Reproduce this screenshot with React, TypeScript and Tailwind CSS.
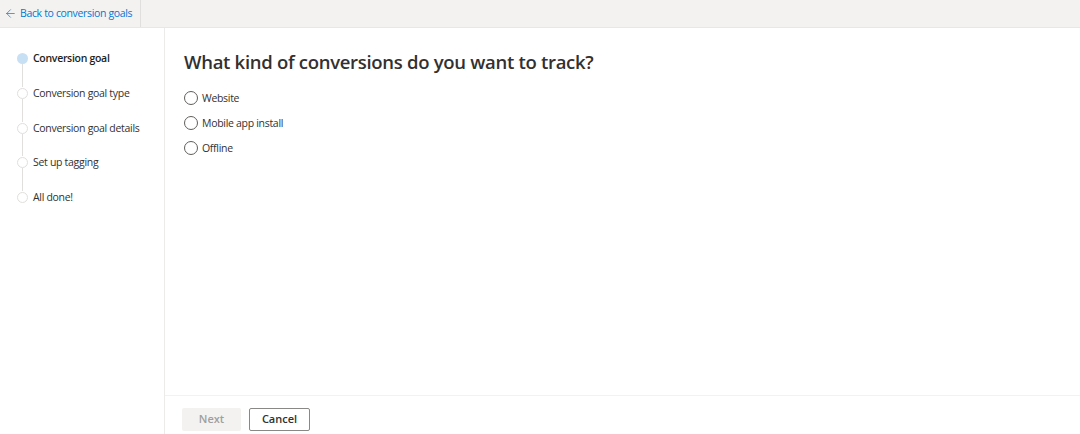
import { ArrowLeft } from 'lucide-react';

const steps = [
  { label: 'Conversion goal', active: true },
  { label: 'Conversion goal type', active: false },
  { label: 'Conversion goal details', active: false },
  { label: 'Set up tagging', active: false },
  { label: 'All done!', active: false },
];

const options = ['Website', 'Mobile app install', 'Offline'];

export default function App() {
  return (
    <div
      className="flex h-[434px] w-[1080px] flex-col overflow-hidden bg-white text-[#323130]"
      style={{ fontFamily: '"Open Sans", "Noto Sans", sans-serif' }}
    >
      {/* Top bar */}
      <div className="flex h-[28px] shrink-0 items-stretch border-b border-[#e9e7e5] bg-[#f3f2f1]">
        <button className="flex items-center gap-[3px] border-r border-[#e1dfdd] pl-[4px] pr-[8px] text-[10.5px] tracking-[-0.35px] text-[#0078d4]">
          <ArrowLeft size={13} strokeWidth={1.3} />
          <span>Back to conversion goals</span>
        </button>
      </div>

      <div className="flex min-h-0 flex-1">
        {/* Sidebar */}
        <nav className="w-[165px] shrink-0 border-r border-[#edebe9] pl-[17px] pt-[24px]">
          {steps.map((step, i) => (
            <div key={step.label} className="flex">
              <div className="flex w-[11px] flex-col items-center">
                <div
                  className={
                    step.active
                      ? 'mt-[1px] h-[11px] w-[11px] rounded-full bg-[#c7e0f4]'
                      : 'mt-[1px] h-[11px] w-[11px] rounded-full border border-[#e1dfdd] bg-white'
                  }
                />
                {i < steps.length - 1 && <div className="h-[22.75px] w-px bg-[#e1dfdd]" />}
              </div>
              <span
                className={`ml-[5px] text-[10.5px] leading-[13px] tracking-[-0.3px] ${
                  step.active ? 'font-semibold text-[#201f1e]' : 'text-[#323130]'
                }`}
              >
                {step.label}
              </span>
            </div>
          ))}
        </nav>

        {/* Main */}
        <div className="flex min-w-0 flex-1 flex-col">
          <div className="flex-1 pl-[19px] pt-[22px]">
            <h1 className="text-[18.5px] font-semibold leading-[24px] tracking-[-0.3px] text-[#323130]">
              What kind of conversions do you want to track?
            </h1>
            <div className="mt-[17px] flex flex-col gap-[11px]">
              {options.map((opt) => (
                <label key={opt} className="flex items-center gap-[4px]">
                  <span className="h-[14px] w-[14px] rounded-full border border-[#605e5c] bg-white" />
                  <span className="text-[10.5px] leading-[14px] tracking-[-0.3px] text-[#323130]">{opt}</span>
                </label>
              ))}
            </div>
          </div>

          {/* Footer */}
          <div className="flex h-[39px] shrink-0 items-start gap-[8px] border-t border-[#f3f2f1] pl-[17px] pt-[12px]">
            <button className="h-[23px] w-[59px] rounded-[2px] bg-[#f3f2f1] text-[11px] font-semibold text-[#a19f9d]">
              Next
            </button>
            <button className="h-[23px] w-[61px] rounded-[2px] border border-[#8a8886] bg-white text-[11px] font-semibold text-[#323130]">
              Cancel
            </button>
          </div>
        </div>
      </div>
    </div>
  );
}
